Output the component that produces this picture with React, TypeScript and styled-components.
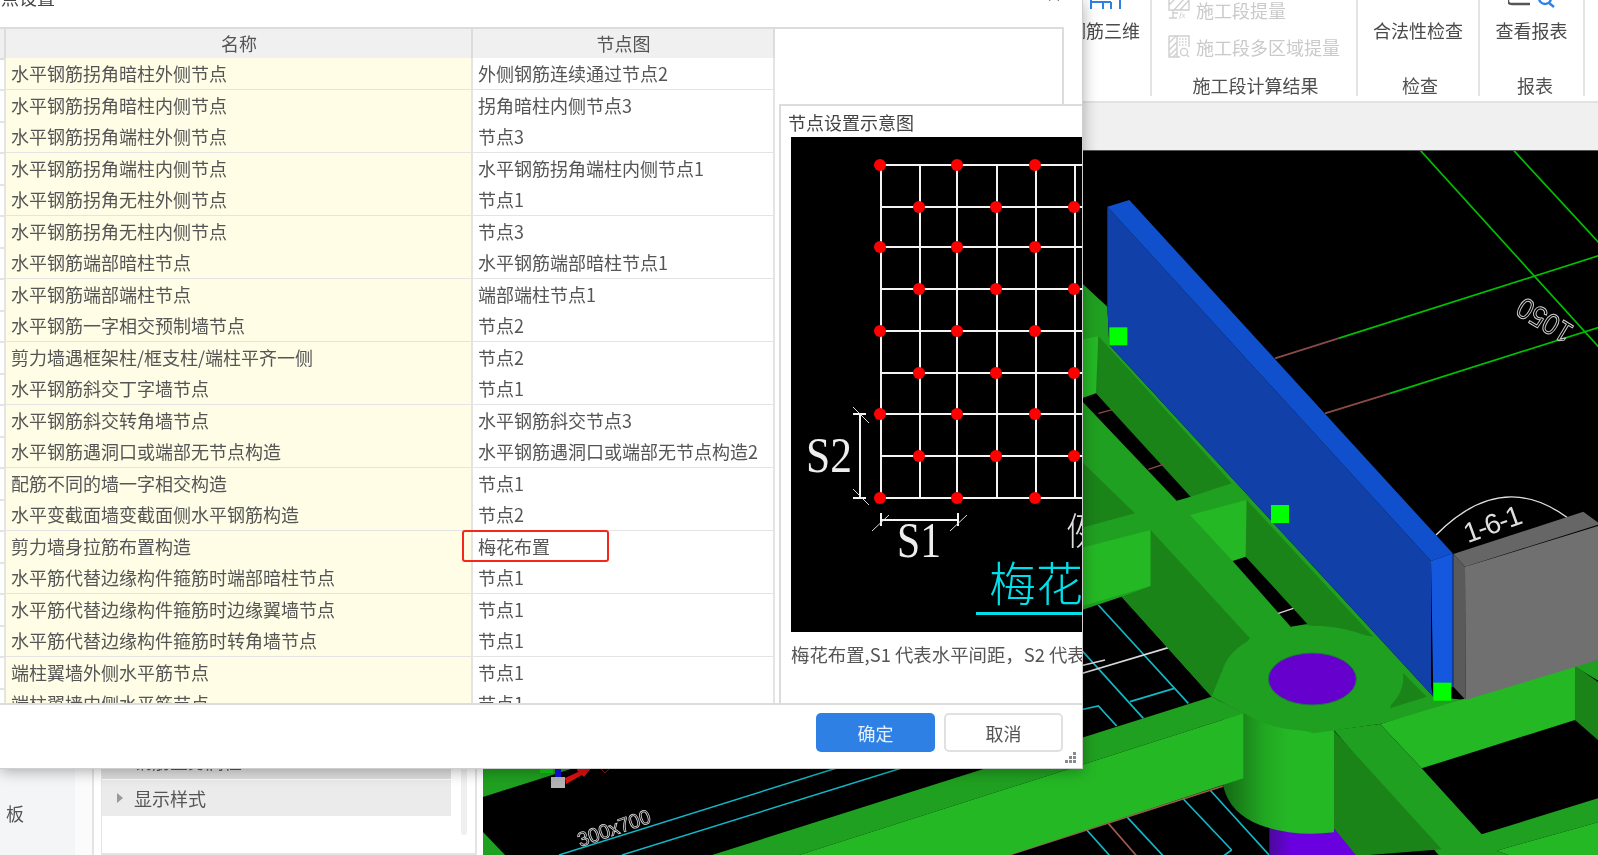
import React from 'react';
import styled, { createGlobalStyle } from 'styled-components';
import { X } from 'lucide-react';

const Global = createGlobalStyle`
  html, body { margin: 0; padding: 0; background: #fff; overflow: hidden; }
  * { box-sizing: border-box; }
`;

const Page = styled.div`
  position: relative;
  width: 1598px;
  height: 855px;
  overflow: hidden;
  background: #fff;
  color: #555;
  font: 18px/24px "Noto Sans CJK SC", "Noto Sans", sans-serif;
  filter: blur(0.45px);
`;

/* ribbon */
const Ribbon = styled.div`
  height: 103px;
  display: flex;
  justify-content: flex-end;
  padding-right: 13px;
  border-bottom: 2px solid #e2e2e2;
`;
const Group = styled.div<{ $w: number }>`
  width: ${p => p.$w}px;
  height: 96px;
  display: flex;
  flex-direction: column;
  border-right: 2px solid #e4e4e4;
`;
const GroupBody = styled.div`
  flex: 1;
  display: flex;
  flex-direction: column;
`;
const GroupLabel = styled.div<{ $shift?: number }>`
  height: 22px;
  line-height: 22px;
  text-align: center;
  padding-left: ${p => p.$shift ?? 0}px;
  color: #4f4f4f;
`;
const LargeTool = styled.div<{ $pad?: number }>`
  display: flex;
  flex-direction: column;
  align-items: center;
  padding-left: ${p => p.$pad ?? 0}px;
  color: #4a4a4a;
`;
const IconStub = styled.div`
  height: 18px;
  display: flex;
  justify-content: center;
  width: 100%;
`;
const SmallTools = styled.div`
  display: flex;
  flex-direction: column;
  gap: 13px;
  margin-top: -2px;
  padding-left: 16px;
`;
const SmallTool = styled.div`
  height: 24px;
  display: flex;
  align-items: flex-start;
  gap: 6px;
  color: #cacaca;
`;

/* app area under the ribbon */
const Main = styled.div`
  height: 752px;
  display: flex;
`;
const Nav = styled.div`
  width: 94px;
  background: linear-gradient(to right, #f4f5f7 75px, #fbfbfb 75px);
  border-right: 2px solid #e4e4e4;
  display: flex;
  align-items: flex-end;
  padding: 0 0 30px 6px;
`;
const PropPanel = styled.div`
  position: relative;
  width: 376px;
  margin-left: 7px;
  border: solid #e4e4e4;
  border-width: 0 2px 2px 1px;
  display: flex;
  flex-direction: column;
  justify-content: flex-end;
  gap: 1px;
  padding: 0 24px 37px 0;
`;
const PropRow = styled.div<{ $shade?: boolean }>`
  height: 36px;
  display: flex;
  align-items: center;
  gap: 11px;
  padding: 0 0 1px 15px;
  background: ${p => (p.$shade ? 'linear-gradient(#ebebeb, #dedede)' : '#ebebeb')};
`;
const Caret = styled.span`
  width: 0;
  height: 0;
  border-left: 6px solid #999;
  border-top: 5px solid transparent;
  border-bottom: 5px solid transparent;
`;
const ScrollThumb = styled.div`
  position: absolute;
  right: 8px;
  bottom: 18px;
  width: 6px;
  height: 120px;
  border-radius: 3px;
  background: #efefef;
`;
const Work = styled.div`
  flex: 1;
  margin-left: 6px;
  display: flex;
  flex-direction: column;
`;
const Band = styled.div`
  height: 48px;
  background: #f0f0f0;
  border-bottom: 1px solid #555;
`;
const CanvasSvg = styled.svg`
  display: block;
  width: 1115px;
  height: 704px;
  background: #000;
`;

/* dialog */
const Dialog = styled.div`
  position: absolute;
  left: 0;
  top: 0;
  width: 1083px;
  height: 769px;
  display: flex;
  flex-direction: column;
  background: #fff;
  border: solid #cfcfcf;
  border-width: 0 1px 1px 0;
  box-shadow: 0 2px 14px rgba(0, 0, 0, 0.32);
`;
const TitleBar = styled.div`
  height: 27px;
  flex: none;
  display: flex;
  justify-content: space-between;
  align-items: flex-start;
  overflow: hidden;
  padding-right: 19px;
`;
const Title = styled.div`
  margin: -15px 0 0 -17px;
  color: #444;
`;
const CloseIcon = styled(X)`
  margin-top: -13px;
  color: #888;
`;
const Body = styled.div`
  height: 676px;
  flex: none;
  display: flex;
  overflow: hidden;
`;
const Table = styled.div`
  width: 775px;
  flex: none;
`;
const RowGrid = styled.div<{ $h: number }>`
  height: ${p => p.$h}px;
  display: grid;
  grid-template-columns: 6px 467px 302px;
`;
const IndexCell = styled.div`
  overflow: hidden;
  display: flex;
  justify-content: flex-end;
  padding-right: 4px;
  font-size: 14px;
  line-height: 30px;
  color: #5b8fc7;
  border: solid #e4e4e4;
  border-width: 0 2px 2px 0;
`;
const HeadCell = styled.div`
  background: #f0f0f0;
  border: solid #dcdcdc;
  border-width: 2px 2px 2px 0;
  text-align: center;
  padding-left: 1px;
  line-height: 29px;
  color: #555;
`;
const HeadIndex = styled(HeadCell)`
  border-right-width: 2px;
`;
const Cell = styled.div<{ $name?: boolean }>`
  position: relative;
  background: ${p => (p.$name ? '#fffde6' : '#fff')};
  border: solid #e4e4e4;
  border-width: 0 2px 2px 0;
  padding-left: 5px;
  line-height: 31px;
  white-space: nowrap;
  color: #555;
`;
const RedMark = styled.div`
  position: absolute;
  left: -11px;
  top: -1px;
  width: 147px;
  height: 32px;
  border: 2px solid #f5261c;
  border-radius: 3px;
`;
const Side = styled.div`
  flex: 1;
  min-width: 0;
  display: flex;
  flex-direction: column;
`;
const SideTop = styled.div`
  height: 77px;
  flex: none;
  width: 289px;
  border: solid #dcdcdc;
  border-width: 2px 2px 0 0;
`;
const Preview = styled.div`
  flex: 1;
  margin-left: 4px;
  min-width: 0;
  overflow: hidden;
  border: solid #dcdcdc;
  border-width: 2px 0 0 2px;
  padding: 4px 0 0 7px;
`;
const PreviewTitle = styled.div`
  height: 27px;
  color: #444;
`;
const Figure = styled.svg`
  display: block;
  width: 291px;
  height: 495px;
  margin-left: 3px;
  background: #000;
`;
const PreviewNote = styled.div`
  margin: 10px 0 0 3px;
  white-space: nowrap;
  font-size: 18.4px;
  color: #555;
`;
const Footer = styled.div`
  position: relative;
  flex: 1;
  display: flex;
  justify-content: flex-end;
  gap: 9px;
  padding: 8px 19px 0 0;
  border-top: 2px solid #dcdcdc;
`;
const Btn = styled.button<{ $primary?: boolean }>`
  width: 119px;
  height: 39px;
  padding: 0;
  border-radius: 5px;
  border: ${p => (p.$primary ? 'none' : '2px solid #e0e0e0')};
  background: ${p => (p.$primary ? '#2f80e4' : '#fff')};
  color: ${p => (p.$primary ? '#e6f0fc' : '#555')};
  font: inherit;
`;
const Grip = styled.svg`
  position: absolute;
  right: 5px;
  bottom: 4px;
  width: 13px;
  height: 13px;
`;

const rows: [string, string][] = [
  ['水平钢筋拐角暗柱外侧节点', '外侧钢筋连续通过节点2'],
  ['水平钢筋拐角暗柱内侧节点', '拐角暗柱内侧节点3'],
  ['水平钢筋拐角端柱外侧节点', '节点3'],
  ['水平钢筋拐角端柱内侧节点', '水平钢筋拐角端柱内侧节点1'],
  ['水平钢筋拐角无柱外侧节点', '节点1'],
  ['水平钢筋拐角无柱内侧节点', '节点3'],
  ['水平钢筋端部暗柱节点', '水平钢筋端部暗柱节点1'],
  ['水平钢筋端部端柱节点', '端部端柱节点1'],
  ['水平钢筋一字相交预制墙节点', '节点2'],
  ['剪力墙遇框架柱/框支柱/端柱平齐一侧', '节点2'],
  ['水平钢筋斜交丁字墙节点', '节点1'],
  ['水平钢筋斜交转角墙节点', '水平钢筋斜交节点3'],
  ['水平钢筋遇洞口或端部无节点构造', '水平钢筋遇洞口或端部无节点构造2'],
  ['配筋不同的墙一字相交构造', '节点1'],
  ['水平变截面墙变截面侧水平钢筋构造', '节点2'],
  ['剪力墙身拉筋布置构造', '梅花布置'],
  ['水平筋代替边缘构件箍筋时端部暗柱节点', '节点1'],
  ['水平筋代替边缘构件箍筋时边缘翼墙节点', '节点1'],
  ['水平筋代替边缘构件箍筋时转角墙节点', '节点1'],
  ['端柱翼墙外侧水平筋节点', '节点1'],
  ['端柱翼墙内侧水平筋节点', '节点1'],
];

const M = '#20a020';
const L = '#25b825';
const D = '#1a8419';

const Poly = ({ f, p }: { f: string; p: string }) => <polygon fill={f} points={p} />;

const Wall3D = () => (
  <CanvasSvg viewBox="483 151 1115 704">
    <defs>
      <linearGradient id="cyl" x1="0" x2="1" y1="0" y2="0">
        <stop offset="0" stopColor="#146a14" />
        <stop offset="0.38" stopColor="#22a822" />
        <stop offset="0.6" stopColor={L} />
        <stop offset="1" stopColor={L} />
      </linearGradient>
      <linearGradient id="pur" x1="0" x2="1" y1="0" y2="0">
        <stop offset="0" stopColor="#4a0a9a" />
        <stop offset="0.25" stopColor="#6a00e0" />
        <stop offset="1" stopColor="#6a00e0" />
      </linearGradient>
    </defs>

    {/* lower-left corner of the model, page coordinates */}
    <Poly f={M} p="483,797 640,747 483,747" />
    <Poly f={M} p="483,832 506,856 483,856" />
    <g fill="none" stroke="#12b8c8" strokeWidth="1.5">
      <line x1="559" y1="855" x2="840" y2="767" />
      <line x1="622" y1="855" x2="905" y2="767" />
    </g>
    <text
      x="614"
      y="828"
      transform="rotate(-19 614 828)"
      textAnchor="middle"
      dominantBaseline="central"
      fontFamily='"Liberation Sans", sans-serif'
      fontSize="20"
      textLength="76"
      lengthAdjust="spacingAndGlyphs"
      fill="none"
      stroke="#dcdcdc"
      strokeWidth="0.8"
    >
      300x700
    </text>
    {/* axis gizmo */}
    <rect x="540" y="768" width="13" height="5" fill="#10d010" />
    <rect x="555" y="768" width="6" height="9" fill="#1010e0" />
    <rect x="551" y="777" width="14" height="11" fill="#b4b4b4" />
    <polygon fill="#e01010" points="565,778 578,772 576,767 592,767 584,777 582,775 566,784" />
    <g stroke="#a01010" strokeWidth="1">
      <line x1="601" y1="769" x2="605" y2="773" />
      <line x1="609" y1="769" x2="605" y2="773" />
    </g>

    {/* main model, drawn at 3x about (1080, 500) */}
    <g transform="translate(1080 500) scale(0.33333)">
      {/* grid lines */}
      <g fill="none" strokeWidth="5">
        <g stroke="#00c000">
          <line x1="1020" y1="-1050" x2="1560" y2="-455" />
          <line x1="1300" y1="-1050" x2="1560" y2="-768" />
          <line x1="775" y1="-485" x2="1560" y2="-734" />
          <line x1="930" y1="-320" x2="1560" y2="-519" />
        </g>
        <g stroke="#8a4a4a">
          <line x1="585" y1="-425" x2="775" y2="-485" />
          <line x1="735" y1="-260" x2="930" y2="-320" />
        </g>
        <g stroke="#12b8c8">
          <line x1="55" y1="315" x2="325" y2="610" />
          <line x1="0" y1="445" x2="190" y2="655" />
          <line x1="150" y1="605" x2="283" y2="565" />
          <polyline points="0,630 55,618 110,678" />
          <line x1="310" y1="897" x2="455" y2="1050" />
          <line x1="455" y1="1050" x2="430" y2="1068" />
          <line x1="390" y1="870" x2="570" y2="1068" />
          <line x1="140" y1="950" x2="250" y2="1068" />
          <line x1="15" y1="984" x2="90" y2="1068" />
        </g>
        <g stroke="#d8d8d8">
          <line x1="0" y1="522" x2="265" y2="443" />
          <line x1="0" y1="498" x2="75" y2="480" />
        </g>
        <g stroke="#a05a50">
          <line x1="85" y1="970" x2="170" y2="1068" />
          <line x1="-222" y1="1068" x2="430" y2="858" />
        </g>
      </g>
      <text
        x="1393"
        y="-538"
        transform="rotate(211 1393 -538)"
        textAnchor="middle"
        dominantBaseline="central"
        fontFamily='"Liberation Sans", sans-serif'
        fontSize="88"
        textLength="178"
        lengthAdjust="spacingAndGlyphs"
        fill="none"
        stroke="#cfcfcf"
        strokeWidth="3"
      >
        1050
      </text>
      <path d="M1068 105 Q1265 -95 1465 55" fill="none" stroke="#e0e0e0" strokeWidth="4" />
      <text
        x="1238"
        y="72"
        transform="rotate(-20 1238 72)"
        textAnchor="middle"
        dominantBaseline="central"
        fontFamily='"Liberation Sans", sans-serif'
        fontSize="84"
        textLength="180"
        lengthAdjust="spacing"
        fill="#dedede"
      >
        1-6-1
      </text>

      {/* purple column and green cylinder */}
      <Poly f="url(#pur)" p="568,960 770,960 835,1068 568,1068" />
      <path d="M430 600 L762 690 L762 997 Q640 1012 540 975 Q450 940 430 860 Z" fill="url(#cyl)" />

      {/* top faces */}
      <Poly
        f={M}
        p="-10,-665 82,-580 88,-465 1060,590 1157,600 900,672 700,700 490,640 395,590 125,290 -10,335"
      />
      <Poly f={D} p="970,520 1040,590 930,625" />

      {/* upper walls and slots */}
      <Poly f={L} p="0,-480 55,-492 55,-320 0,-305" />
      <Poly f={D} p="55,-492 455,-50 332,-10 48,-320" />
      <Poly f="#000" p="0,-303 48,-320 332,-10 290,2" />
      <line x1="55" y1="-260" x2="100" y2="-272" stroke="#8a4a4a" strokeWidth="4" />
      <line x1="205" y1="-92" x2="250" y2="-107" stroke="#8a4a4a" strokeWidth="4" />
      <Poly f={D} p="0,-120 165,40 0,85" />
      <Poly f={L} p="330,45 500,0 500,170 458,183" />
      <Poly f={D} p="500,0 880,410 680,375 497,170" />
      <Poly f="#000" p="458,183 497,170 682,372 632,380" />
      <line x1="595" y1="340" x2="640" y2="325" stroke="#d8d8d8" strokeWidth="4" />
      <Poly f={L} p="0,145 212,90 212,258 0,320" />
      <Poly f={D} p="212,90 510,415 423,520 395,590 125,290 212,258" />

      {/* beam to the right */}
      <Poly f={M} p="1157,600 1485,497 1560,478 1560,545 1485,500 900,672" />
      <Poly f={L} p="900,672 1485,497 1485,660 1025,805" />
      <Poly f={D} p="1485,497 1560,550 1560,725 1485,660" />

      {/* diagonal beam to the lower right */}
      <Poly f={M} p="762,690 900,672 1025,805 1205,1003 1560,893 1560,965 1250,1052 1300,1070 1080,1070" />
      <Poly f={L} p="1250,1052 1560,965 1560,1070 1300,1070" />
      <Poly f={D} p="762,692 1085,1048 830,1068 762,985" />

      {/* cylinder top */}
      <ellipse cx="697" cy="535" rx="273" ry="158" fill={M} />
      <ellipse cx="697" cy="537" rx="132" ry="78" fill="#6600cc" stroke="#1a7a3a" strokeWidth="3" />

      {/* beam to the left */}
      <Poly f={M} p="-1113,1068 395,590 490,640 -852,1068" />
      <Poly f={L} p="-852,1068 490,640 490,835 -222,1068" />

      {/* blue wall */}
      <Poly f="#1040a8" p="82,-880 1053,183 1053,560 1060,590 88,-465 82,-580" />
      <Poly f="#1150cc" p="82,-880 148,-900 1118,160 1053,183" />
      <Poly f="#1458e0" p="1053,183 1118,160 1118,560 1060,590" />

      {/* grey column */}
      <Poly f="#666666" p="1120,162 1510,35 1560,72 1155,200" />
      <Poly f="#5a5a5a" p="1120,162 1155,200 1157,600 1120,560" />
      <Poly f="#707070" p="1155,200 1560,76 1560,478 1157,600" />

      {/* grips */}
      <rect x="88" y="-518" width="54" height="54" fill="#00ff00" />
      <rect x="573" y="15" width="54" height="54" fill="#00ff00" />
      <rect x="1060" y="548" width="54" height="54" fill="#00ff00" />
    </g>
  </CanvasSvg>
);

const gridX = [881, 920, 957, 997, 1036, 1075];
const gridY = [165, 207, 247, 289, 331, 373, 414, 456, 498];

const Detail = () => (
  <Figure viewBox="791 137 291 495">
    <g stroke="#f4f4f4" strokeWidth="2">
      {gridX.map(x => (
        <line key={x} x1={x} y1={165} x2={x} y2={498} />
      ))}
      {gridY.map(y => (
        <line key={y} x1={881} y1={y} x2={1082} y2={y} />
      ))}
      {/* dimension S2 */}
      <line x1="860" y1="414" x2="860" y2="498" />
      <line x1="853" y1="414" x2="866" y2="414" />
      <line x1="853" y1="498" x2="866" y2="498" />
      {/* dimension S1 */}
      <line x1="881" y1="520" x2="958" y2="520" />
      <line x1="881" y1="513" x2="881" y2="526" />
      <line x1="958" y1="513" x2="958" y2="526" />
      <g strokeWidth="1" stroke="#ddd">
        <line x1="853" y1="407" x2="869" y2="423" />
        <line x1="853" y1="489" x2="869" y2="505" />
        <line x1="872" y1="531" x2="889" y2="515" />
        <line x1="950" y1="531" x2="967" y2="515" />
      </g>
    </g>
    {gridY.map((y, r) =>
      (r % 2 === 0 ? [880, 957, 1035] : [919, 996, 1074]).map(x => (
        <circle key={`${x}-${y}`} cx={x} cy={y} r="6" fill="#ff0000" />
      ))
    )}
    <g fontFamily='"Liberation Serif", serif' fontSize="50" fill="#eee">
      <text x="806" y="472" textLength="46" lengthAdjust="spacingAndGlyphs">S2</text>
      <text x="897" y="557" textLength="44" lengthAdjust="spacingAndGlyphs">S1</text>
    </g>
    <text x="1066" y="545" fontFamily='"Noto Sans CJK SC", sans-serif' fontSize="37" fontWeight="300" fill="#ddd">
      例
    </text>
    <text x="989" y="601" fontFamily='"Noto Sans CJK SC", sans-serif' fontSize="47" fontWeight="300" fill="#00e0ea">
      梅花布置
    </text>
    <rect x="976" y="612" width="106" height="3" fill="#00e0ea" />
  </Figure>
);

const TopIconA = () => (
  <svg width="38" height="9" viewBox="0 0 38 9" fill="none" stroke="#2f80e4" strokeWidth="2">
    <path d="M6 2 H26 M6 0 V9 M18 2 V9 M26 2 V9 M35 0 V9" />
  </svg>
);
const TopIconReport = () => (
  <svg width="48" height="8" viewBox="0 0 48 8" fill="none" strokeWidth="2.4">
    <path d="M0 -3 V1 Q0 4 4 4 H22" stroke="#555" />
    <circle cx="37" cy="-2" r="6" stroke="#2f80e4" />
    <path d="M41 3 L46 7" stroke="#2f80e4" />
  </svg>
);
const FxIcon = () => (
  <svg width="22" height="21" viewBox="0 0 22 21" fill="none" stroke="#cfcfcf" strokeWidth="1.4">
    <path d="M1 0 V12 H21 V0 M6 12 L17 0 M12 12 L22 1 M1 7 L8 0" />
    <path d="M5 12 V20 M1 20 H9 M5 15 H10" />
    <text x="11" y="20" fontSize="9" fontStyle="italic" fill="#cfcfcf" stroke="none" fontFamily='"Liberation Serif", serif'>
      fx
    </text>
  </svg>
);
const AreaIcon = () => (
  <svg width="22" height="23" viewBox="0 0 22 23" fill="none" stroke="#cfcfcf" strokeWidth="1.4">
    <path d="M1 1 H21 V12 M1 1 V22 H12 M9 1 V22" />
    <path d="M1 8 L8 1 M1 15 L9 7 M1 21 L9 13 M5 22 L9 18" />
    <path d="M11 4 H19 M11 7 H19 M11 10 H19" strokeDasharray="1.5 1.5" />
    <circle cx="16" cy="17" r="3.6" />
    <path d="M19 20 L21 22" />
  </svg>
);

export default function App() {
  return (
    <>
      <Global />
      <Page>
        <Ribbon>
          <Group $w={110}>
            <GroupBody>
              <LargeTool $pad={16}>
                <IconStub>
                  <TopIconA />
                </IconStub>
                <span>钢筋三维</span>
              </LargeTool>
            </GroupBody>
          </Group>
          <Group $w={206}>
            <GroupBody>
              <SmallTools>
                <SmallTool>
                  <FxIcon />
                  <span>施工段提量</span>
                </SmallTool>
                <SmallTool>
                  <AreaIcon />
                  <span>施工段多区域提量</span>
                </SmallTool>
              </SmallTools>
            </GroupBody>
            <GroupLabel $shift={3}>施工段计算结果</GroupLabel>
          </Group>
          <Group $w={122}>
            <GroupBody>
              <LargeTool>
                <IconStub />
                <span>合法性检查</span>
              </LargeTool>
            </GroupBody>
            <GroupLabel $shift={4}>检查</GroupLabel>
          </Group>
          <Group $w={105}>
            <GroupBody>
              <LargeTool>
                <IconStub>
                  <TopIconReport />
                </IconStub>
                <span>查看报表</span>
              </LargeTool>
            </GroupBody>
            <GroupLabel $shift={7}>报表</GroupLabel>
          </Group>
        </Ribbon>
        <Main>
          <Nav>板</Nav>
          <PropPanel>
            <PropRow $shade>
              <Caret />
              钢筋业务属性
            </PropRow>
            <PropRow>
              <Caret />
              显示样式
            </PropRow>
            <ScrollThumb />
          </PropPanel>
          <Work>
            <Band />
            <Wall3D />
          </Work>
        </Main>

        <Dialog>
          <TitleBar>
            <Title>节点设置</Title>
            <CloseIcon size={18} strokeWidth={1.5} />
          </TitleBar>
          <Body>
            <Table>
              <RowGrid $h={31}>
                <HeadIndex />
                <HeadCell>名称</HeadCell>
                <HeadCell>节点图</HeadCell>
              </RowGrid>
              {rows.map(([name, node], i) => (
                <RowGrid key={name} $h={31.5}>
                  <IndexCell>{i + 1}</IndexCell>
                  <Cell $name>{name}</Cell>
                  <Cell>
                    {node}
                    {node === '梅花布置' && <RedMark />}
                  </Cell>
                </RowGrid>
              ))}
            </Table>
            <Side>
              <SideTop />
              <Preview>
                <PreviewTitle>节点设置示意图</PreviewTitle>
                <Detail />
                <PreviewNote>梅花布置,S1 代表水平间距，S2 代表垂直间距</PreviewNote>
              </Preview>
            </Side>
          </Body>
          <Footer>
            <Btn $primary>确定</Btn>
            <Btn>取消</Btn>
            <Grip viewBox="0 0 13 13" fill="#8a8a8a">
              <rect x="9" y="1" width="3" height="3" />
              <rect x="5" y="5" width="3" height="3" />
              <rect x="9" y="5" width="3" height="3" />
              <rect x="1" y="9" width="3" height="3" />
              <rect x="5" y="9" width="3" height="3" />
              <rect x="9" y="9" width="3" height="3" />
            </Grip>
          </Footer>
        </Dialog>
      </Page>
    </>
  );
}
